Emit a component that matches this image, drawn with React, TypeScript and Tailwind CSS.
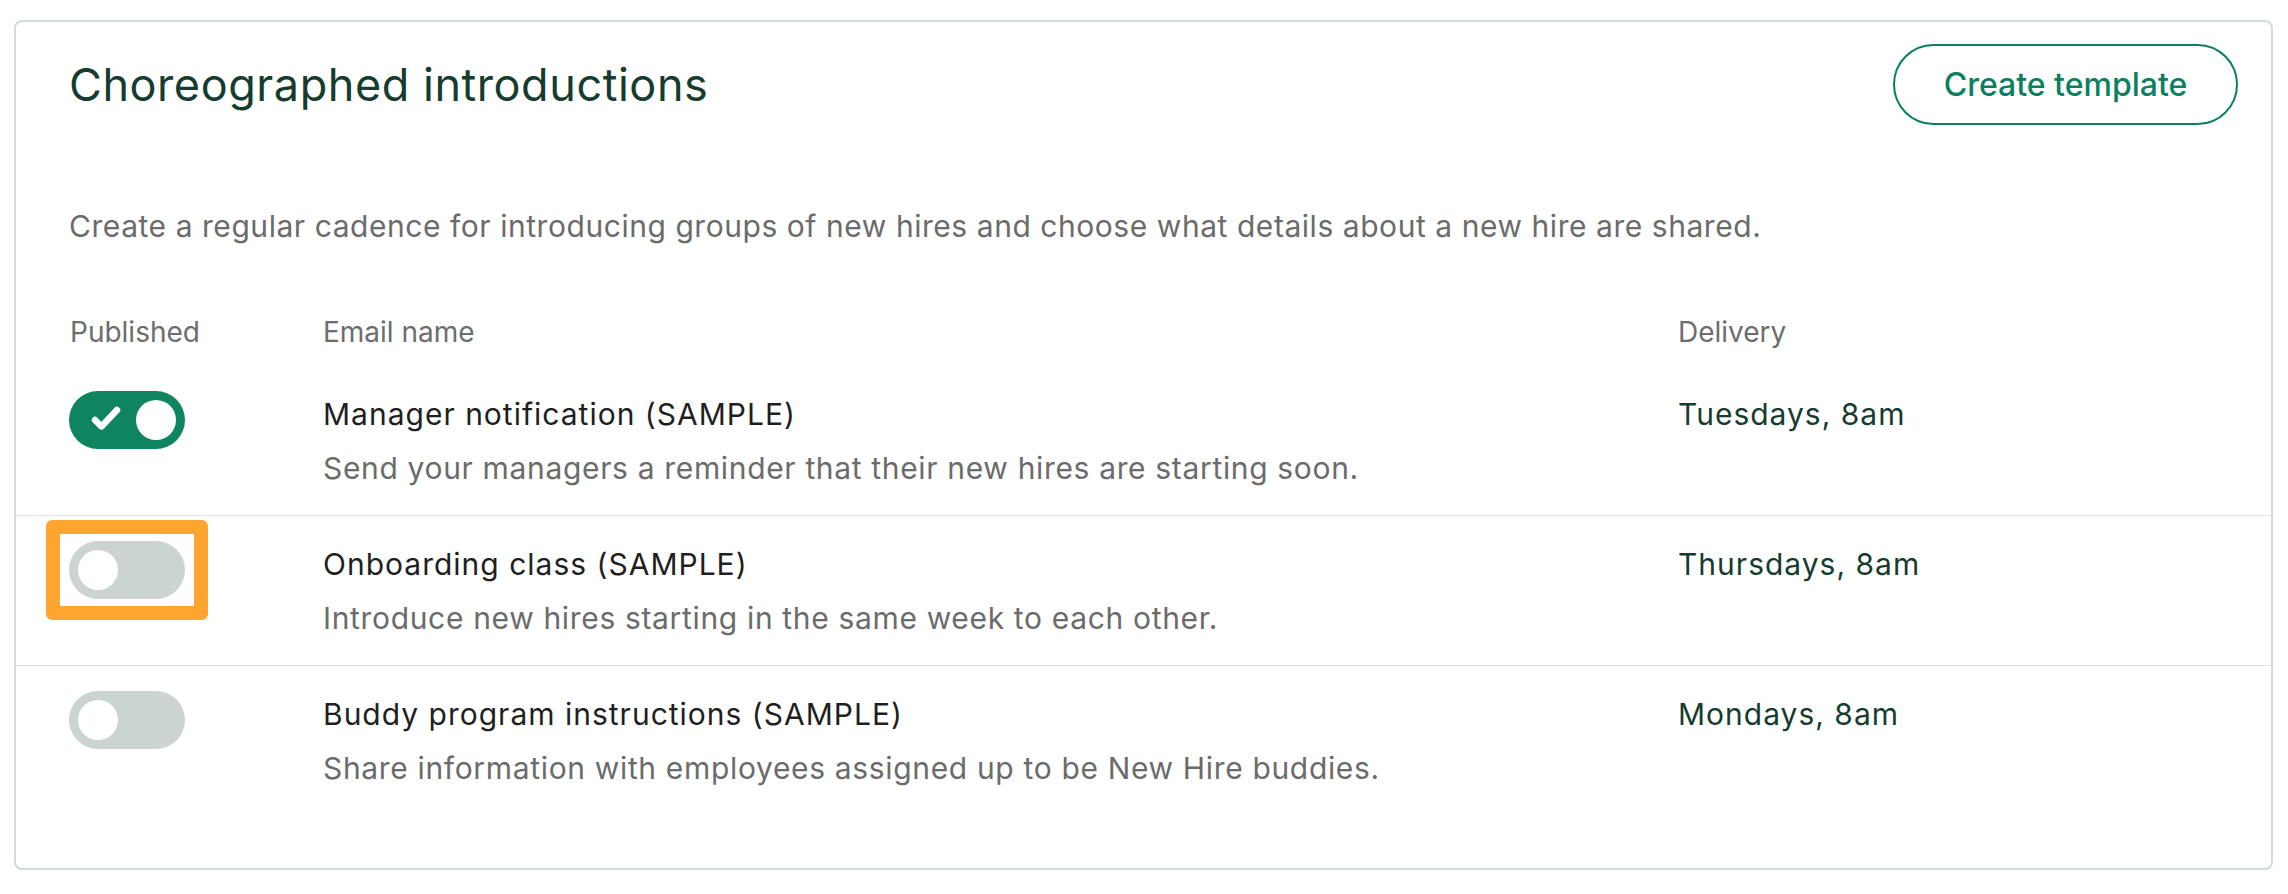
import React from "react";

type Row = { name: string; desc: string; when: string; on: boolean; highlight?: boolean };

const rows: Row[] = [
  {
    name: "Manager notification (SAMPLE)",
    desc: "Send your managers a reminder that their new hires are starting soon.",
    when: "Tuesdays, 8am",
    on: true,
  },
  {
    name: "Onboarding class (SAMPLE)",
    desc: "Introduce new hires starting in the same week to each other.",
    when: "Thursdays, 8am",
    on: false,
    highlight: true,
  },
  {
    name: "Buddy program instructions (SAMPLE)",
    desc: "Share information with employees assigned up to be New Hire buddies.",
    when: "Mondays, 8am",
    on: false,
  },
];

function Toggle({ on }: { on: boolean }) {
  if (on) {
    return (
      <div className="relative flex h-[58px] w-[116px] items-center justify-end rounded-full bg-[#0f8461] p-[9px]">
        <svg className="absolute left-0 top-0" width="116" height="58" viewBox="0 0 116 58">
          <path
            d="M26 29 L32.5 35.5 L48 19"
            fill="none"
            stroke="#ffffff"
            strokeWidth="6.5"
            strokeLinecap="round"
            strokeLinejoin="round"
          />
        </svg>
        <div className="h-[40px] w-[40px] rounded-full bg-white" />
      </div>
    );
  }
  return (
    <div className="flex h-[58px] w-[116px] items-center justify-start rounded-full bg-[#cbd4d1] p-[9px]">
      <div className="h-[40px] w-[40px] rounded-full bg-white" />
    </div>
  );
}

export default function App() {
  return (
    <div
      className="h-[894px] w-[2288px] bg-white pl-[14px] pr-[15px] pt-[20px]"
      style={{ fontFamily: "Inter, 'Noto Sans', sans-serif" }}
    >
      <div className="h-[850px] rounded-[8px] border-2 border-[#d3dad8] bg-white">
        <div className="pl-[53px] pr-[33px] pt-[22px]">
          <div className="flex items-center justify-between">
            <h1 className="text-[45px] leading-[56px] font-normal tracking-[0.55px] text-[#163b2f]">
              Choreographed introductions
            </h1>
            <button className="flex h-[81px] w-[345px] items-center justify-center rounded-full border-2 border-[#0b7f5f] bg-white text-[32px] font-medium text-[#0b7f5f]">
              Create template
            </button>
          </div>
          <p className="mt-[79px] text-[30px] leading-[45px] tracking-[0.55px] text-[#6b6b6b]">
            Create a regular cadence for introducing groups of new hires and choose what details about a new hire are
            shared.
          </p>
        </div>

        <div className="mt-[62px] flex pl-[54px] text-[28px] leading-[42px] text-[#6d6d6d]">
          <div className="w-[253px]">Published</div>
          <div className="w-[1355px]">Email name</div>
          <div>Delivery</div>
        </div>

        <div className="mt-[13px]">
          {rows.map((r, i) => (
            <div
              key={r.name}
              className={
                "flex pl-[53px] pt-[24px] pb-[24px] " +
                (i < rows.length - 1 ? "border-b border-[#e0e0e0]" : "")
              }
            >
              <div className="w-[254px] pt-[1px]">
                <div className="relative inline-block">
                  <Toggle on={r.on} />
                  {r.highlight && (
                    <div className="absolute bottom-[-21px] left-[-23px] right-[-23px] top-[-21px] rounded-[6px] border-[14px] border-[#fea52f]" />
                  )}
                </div>
              </div>
              <div className="w-[1355px]">
                <div className="mt-[2px] text-[30px] leading-[45px] tracking-[1px] text-[#1f1f1f]">{r.name}</div>
                <div className="mt-[9px] text-[30px] leading-[45px] tracking-[0.66px] text-[#6b6b6b]">{r.desc}</div>
              </div>
              <div className="mt-[2px] text-[30px] leading-[45px] tracking-[1px] text-[#163b2f]">{r.when}</div>
            </div>
          ))}
        </div>
      </div>
    </div>
  );
}
